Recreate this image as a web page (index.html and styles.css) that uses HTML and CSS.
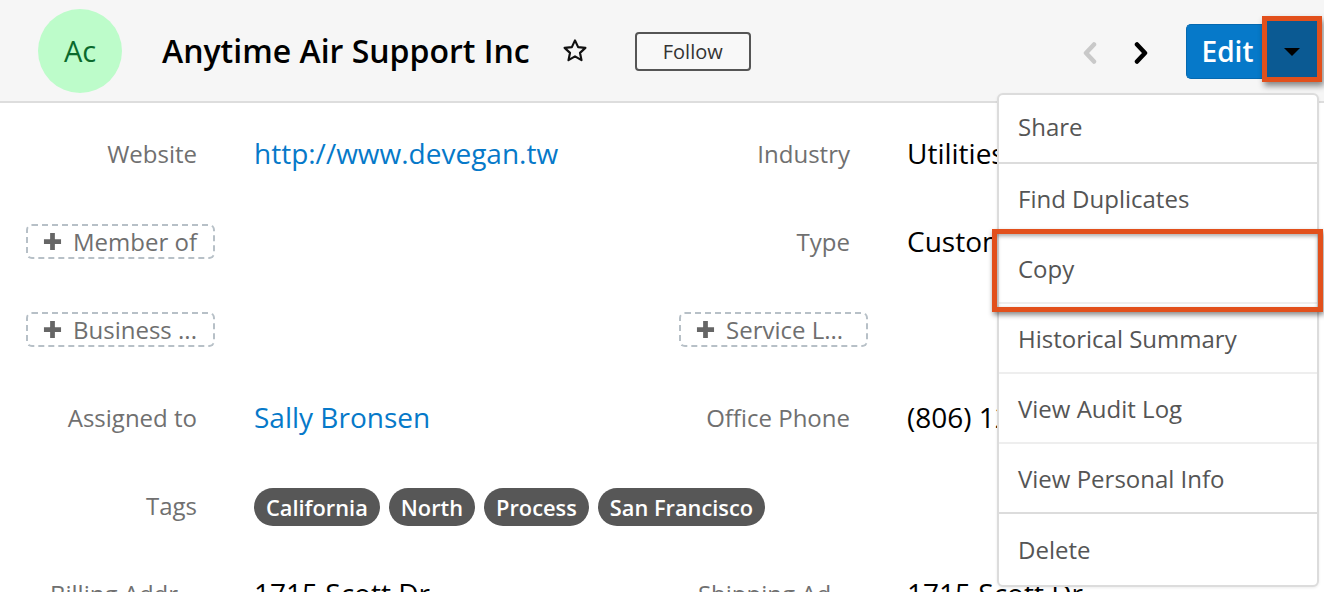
FILE: index.html
```html
<!DOCTYPE html>
<html lang="en">
<head>
<meta charset="utf-8">
<title>Anytime Air Support Inc</title>
<link rel="stylesheet" href="styles.css">
</head>
<body>
<div class="page">
  <header class="head">
    <div class="avatar">Ac</div>
    <h1 class="title">Anytime Air Support Inc</h1>
    <svg class="star" viewBox="0 0 24 24" width="26" height="26" aria-hidden="true">
      <path d="M12 2.2l2.9 6.2 6.7.7-5 4.6 1.4 6.7L12 17l-6 3.4 1.4-6.7-5-4.6 6.7-.7z" fill="none" stroke="#111" stroke-width="2" stroke-linejoin="round"/>
    </svg>
    <button class="follow">Follow</button>
    <div class="actions">
      <span class="nav nav-prev">
        <svg viewBox="0 0 16 22" width="16" height="22" aria-hidden="true"><polyline points="12,2.5 4,11 12,19.5" fill="none" stroke="#c9c9c9" stroke-width="4.5" stroke-linecap="round" stroke-linejoin="round"/></svg>
      </span>
      <span class="nav nav-next">
        <svg viewBox="0 0 16 22" width="16" height="22" aria-hidden="true"><polyline points="4,2.5 12,11 4,19.5" fill="none" stroke="#000" stroke-width="4.5" stroke-linecap="round" stroke-linejoin="round"/></svg>
      </span>
      <div class="btn-group">
        <button class="edit">Edit</button>
        <button class="caret">
          <span class="caret-hl"><span class="tri"></span></span>
        </button>
      </div>
    </div>
  </header>

  <main class="record">
    <div class="label">Website</div>
    <div class="value link">http://www.devegan.tw</div>
    <div class="label">Industry</div>
    <div class="value">Utilities</div>

    <div class="label"><span class="add"><svg class="plus" viewBox="0 0 20 20" width="19" height="19" aria-hidden="true"><path d="M7.5 1h5v6.5H19v5h-6.5V19h-5v-6.5H1v-5h6.5z" fill="#666"/></svg>Member of</span></div>
    <div class="value"></div>
    <div class="label">Type</div>
    <div class="value">Customer</div>

    <div class="label"><span class="add"><svg class="plus" viewBox="0 0 20 20" width="19" height="19" aria-hidden="true"><path d="M7.5 1h5v6.5H19v5h-6.5V19h-5v-6.5H1v-5h6.5z" fill="#666"/></svg>Business ...</span></div>
    <div class="value"></div>
    <div class="label"><span class="add"><svg class="plus" viewBox="0 0 20 20" width="19" height="19" aria-hidden="true"><path d="M7.5 1h5v6.5H19v5h-6.5V19h-5v-6.5H1v-5h6.5z" fill="#666"/></svg>Service L...</span></div>
    <div class="value"></div>

    <div class="label">Assigned to</div>
    <div class="value link">Sally Bronsen</div>
    <div class="label">Office Phone</div>
    <div class="value">(806) 123-4567</div>

    <div class="label">Tags</div>
    <div class="value tags">
      <span class="tag">California</span>
      <span class="tag">North</span>
      <span class="tag">Process</span>
      <span class="tag">San Francisco</span>
    </div>

    <div class="label">Billing Addr...</div>
    <div class="value">1715 Scott Dr.</div>
    <div class="label">Shipping Ad...</div>
    <div class="value">1715 Scott Dr.</div>
  </main>

  <ul class="menu">
    <li class="sep-strong">Share</li>
    <li>Find Duplicates</li>
    <li class="copy">Copy<span class="copy-hl"></span></li>
    <li>Historical Summary</li>
    <li>View Audit Log</li>
    <li class="sep-strong">View Personal Info</li>
    <li>Delete</li>
  </ul>
</div>
</body>
</html>
```

FILE: styles.css
```css
* { box-sizing: border-box; }

html, body {
  margin: 0;
  padding: 0;
  background: #fff;
}

body {
  font-family: "Open Sans", "Noto Sans", sans-serif;
  width: 1324px;
  height: 592px;
  overflow: hidden;
}

.page {
  position: relative;
  width: 1324px;
  height: 592px;
  overflow: hidden;
}

/* ---------- header ---------- */
.head {
  display: flex;
  align-items: center;
  height: 103px;
  padding: 0 8px 0 38px;
  background: #f6f6f6;
  border-bottom: 2px solid #dddddd;
}

.avatar {
  width: 84px;
  height: 84px;
  border-radius: 50%;
  background: #bdfcca;
  color: #0b6a2d;
  font-size: 29px;
  display: flex;
  align-items: center;
  justify-content: center;
  flex: none;
}

.title {
  margin: 0 0 0 40px;
  font-size: 32px;
  font-weight: 600;
  color: #000;
  line-height: 1;
}

.star {
  margin-left: 32px;
  flex: none;
}

.follow {
  margin-left: 47px;
  width: 116px;
  height: 39px;
  border: 2px solid #555;
  border-radius: 4px;
  background: #f8f8f8;
  color: #333;
  font-family: inherit;
  font-size: 20px;
  padding: 0;
  margin-top: 2px;
}

.actions {
  margin-left: auto;
  display: flex;
  align-items: center;
  height: 100%;
}

.nav {
  display: flex;
  align-items: center;
  justify-content: center;
  width: 16px;
  height: 22px;
  margin-top: 4px;
}

.nav-prev { margin-right: 35px; }
.nav-next { margin-right: 37px; }

.btn-group {
  display: flex;
  align-items: stretch;
  height: 55px;
  margin-top: 1px;
}

.edit {
  width: 82px;
  border: 1px solid #0569b0;
  border-right: none;
  border-radius: 5px 0 0 5px;
  background: #0679c9;
  color: #fff;
  font-family: inherit;
  font-size: 28px;
  font-weight: 600;
  padding: 0;
}

.caret {
  position: relative;
  width: 48px;
  border: none;
  border-radius: 0 5px 5px 0;
  background: #0b5c95;
  padding: 0;
}

.caret-hl {
  position: absolute;
  left: -6px;
  right: -6px;
  top: -8px;
  bottom: -3px;
  border: 5px solid #e2501c;
  background: #0b5a93;
  box-shadow: 2px 4px 6px rgba(0, 0, 0, 0.45);
  display: flex;
  align-items: center;
  justify-content: center;
}

.tri {
  width: 0;
  height: 0;
  border-left: 8px solid transparent;
  border-right: 8px solid transparent;
  border-top: 8px solid #000;
  margin-top: 6px;
}

/* ---------- record body ---------- */
.record {
  display: grid;
  grid-template-columns: 197px 343px 196px 1fr;
  column-gap: 57px;
  grid-auto-rows: 88px;
  align-items: center;
  padding-top: 6px;
}

.label {
  text-align: right;
  color: #707070;
  font-size: 24px;
  white-space: nowrap;
  display: flex;
  justify-content: flex-end;
}

.value {
  color: #000;
  font-size: 28px;
  white-space: nowrap;
}

.link { color: #0679c9; }

.add {
  display: inline-flex;
  align-items: center;
  width: 189px;
  height: 35px;
  margin-right: -18px;
  padding-left: 15px;
  border: 2px dashed #b7c0c7;
  border-radius: 6px;
  color: #6f6f6f;
  font-size: 24px;
  white-space: nowrap;
  overflow: hidden;
}

.plus {
  flex: none;
  margin-right: 11px;
}

.tags {
  grid-column: 2 / -1;
  display: flex;
  gap: 9px;
  padding-top: 4px;
}

.tag {
  display: inline-flex;
  align-items: center;
  height: 38px;
  padding: 0 12px;
  border-radius: 19px;
  background: #575757;
  color: #fff;
  font-size: 21.8px;
  font-weight: 600;
}

/* ---------- dropdown menu (overlay) ---------- */
.menu {
  position: absolute;
  left: 997px;
  top: 93px;
  width: 322px;
  margin: 0;
  padding: 0;
  list-style: none;
  background: #fff;
  border: 2px solid #dcdcdc;
  border-radius: 6px;
  box-shadow: 0 1px 3px rgba(0, 0, 0, 0.08);
}

.menu li {
  position: relative;
  height: 70px;
  display: flex;
  align-items: center;
  padding-left: 19px;
  color: #555;
  font-size: 24px;
  border-bottom: 2px solid #eeeeee;
}

.menu li:first-child { height: 69px; padding-bottom: 4px; }
.menu li:last-child { border-bottom: none; height: 71px; }
.menu li.sep-strong { border-bottom-color: #dcdcdc; }

.copy-hl {
  position: absolute;
  left: -7px;
  right: -6px;
  top: -5px;
  bottom: -10px;
  border: 5px solid #e2501c;
  box-shadow: 1px 3px 5px rgba(0, 0, 0, 0.45), inset 0 2px 4px rgba(0, 0, 0, 0.35);
}
```
